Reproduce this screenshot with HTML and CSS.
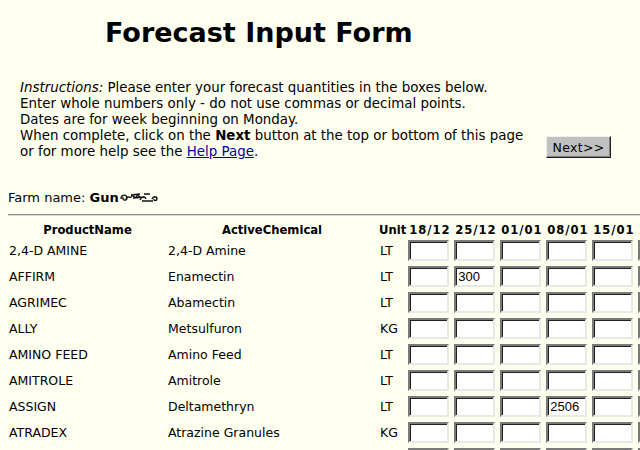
FILE: index.html
```html
<!DOCTYPE html>
<html>
<head>
<meta charset="utf-8">
<title>Forecast Input Form</title>
<link rel="stylesheet" href="styles.css">
</head>
<body>
<div class="page">
  <header class="top">
    <h1 class="title">Forecast Input Form</h1>
  </header>
  <section class="intro">
    <p class="instructions"><em>Instructions:</em> Please enter your forecast quantities in the boxes below.<br>
    Enter whole numbers only - do not use commas or decimal points.<br>
    Dates are for week beginning on Monday.<br>
    When complete, click on the <b>Next</b> button at the top or bottom of this page<br>
    or for more help see the <a href="#" class="help">Help Page</a>.</p>
    <button class="next" type="button">Next&gt;&gt;</button>
  </section>
  <p class="farm">Farm name: <b>Gun</b><svg class="scrib" width="42" height="12" viewBox="0 0 40 12"><path d="M1 8 C1 3 7 3 7 7 C7 10 2 10 3 6 M6 8 C8 3 10 9 12 5 C13 3 15 9 17 5 C18 3 20 8 22 6 M11 4 L20 3 M13 7 L25 6 M20 9 C22 5 25 5 26 8 M24 3 L30 3 M22 10 L33 10 M32 8 C33 5 37 5 37 8 C37 10 33 10 34 8" fill="none" stroke="#111" stroke-width="1.4"/></svg></p>
  <hr class="rule">
  <table class="grid">
    <thead>
      <tr>
        <th class="c-prod">ProductName</th>
        <th class="c-chem">ActiveChemical</th>
        <th class="c-unit">Unit</th>
        <th class="c-date">18/12</th>
        <th class="c-date">25/12</th>
        <th class="c-date">01/01</th>
        <th class="c-date">08/01</th>
        <th class="c-date">15/01</th>
        <th class="c-date">22/01</th>
      </tr>
    </thead>
    <tbody>
      <tr><td class="c-prod">2,4-D AMINE</td><td class="c-chem">2,4-D Amine</td><td class="c-unit">LT</td><td class="c-date"><input class="qty"></td><td class="c-date"><input class="qty"></td><td class="c-date"><input class="qty"></td><td class="c-date"><input class="qty"></td><td class="c-date"><input class="qty"></td><td class="c-date"><input class="qty"></td></tr>
      <tr><td class="c-prod">AFFIRM</td><td class="c-chem">Enamectin</td><td class="c-unit">LT</td><td class="c-date"><input class="qty"></td><td class="c-date"><input class="qty" value="300"></td><td class="c-date"><input class="qty"></td><td class="c-date"><input class="qty"></td><td class="c-date"><input class="qty"></td><td class="c-date"><input class="qty"></td></tr>
      <tr><td class="c-prod">AGRIMEC</td><td class="c-chem">Abamectin</td><td class="c-unit">LT</td><td class="c-date"><input class="qty"></td><td class="c-date"><input class="qty"></td><td class="c-date"><input class="qty"></td><td class="c-date"><input class="qty"></td><td class="c-date"><input class="qty"></td><td class="c-date"><input class="qty"></td></tr>
      <tr><td class="c-prod">ALLY</td><td class="c-chem">Metsulfuron</td><td class="c-unit">KG</td><td class="c-date"><input class="qty"></td><td class="c-date"><input class="qty"></td><td class="c-date"><input class="qty"></td><td class="c-date"><input class="qty"></td><td class="c-date"><input class="qty"></td><td class="c-date"><input class="qty"></td></tr>
      <tr><td class="c-prod">AMINO FEED</td><td class="c-chem">Amino Feed</td><td class="c-unit">LT</td><td class="c-date"><input class="qty"></td><td class="c-date"><input class="qty"></td><td class="c-date"><input class="qty"></td><td class="c-date"><input class="qty"></td><td class="c-date"><input class="qty"></td><td class="c-date"><input class="qty"></td></tr>
      <tr><td class="c-prod">AMITROLE</td><td class="c-chem">Amitrole</td><td class="c-unit">LT</td><td class="c-date"><input class="qty"></td><td class="c-date"><input class="qty"></td><td class="c-date"><input class="qty"></td><td class="c-date"><input class="qty"></td><td class="c-date"><input class="qty"></td><td class="c-date"><input class="qty"></td></tr>
      <tr><td class="c-prod">ASSIGN</td><td class="c-chem">Deltamethryn</td><td class="c-unit">LT</td><td class="c-date"><input class="qty"></td><td class="c-date"><input class="qty"></td><td class="c-date"><input class="qty"></td><td class="c-date"><input class="qty" value="2506"></td><td class="c-date"><input class="qty"></td><td class="c-date"><input class="qty"></td></tr>
      <tr><td class="c-prod">ATRADEX</td><td class="c-chem">Atrazine Granules</td><td class="c-unit">KG</td><td class="c-date"><input class="qty"></td><td class="c-date"><input class="qty"></td><td class="c-date"><input class="qty"></td><td class="c-date"><input class="qty"></td><td class="c-date"><input class="qty"></td><td class="c-date"><input class="qty"></td></tr>
      <tr><td class="c-prod">AVADEX</td><td class="c-chem">Tri-allate</td><td class="c-unit">LT</td><td class="c-date"><input class="qty"></td><td class="c-date"><input class="qty"></td><td class="c-date"><input class="qty"></td><td class="c-date"><input class="qty"></td><td class="c-date"><input class="qty"></td><td class="c-date"><input class="qty"></td></tr>
    </tbody>
  </table>
</div>
</body>
</html>
```

FILE: styles.css
```css
html, body {
  margin: 0;
  padding: 0;
  background: #fffff0;
  overflow: hidden;
}
.page {
  width: 720px;
  padding: 0 0 0 8px;
  font-family: "DejaVu Sans", Verdana, sans-serif;
  font-size: 12.5px;
  color: #000;
}
.top {
  padding: 15px 0 0 97px;
  height: 80px;
  box-sizing: border-box;
}
.title {
  margin: 0;
  font-size: 27px;
  font-weight: bold;
  line-height: 36px;
}
.intro {
  display: flex;
  align-items: flex-end;
  padding-left: 12px;
  width: 591px;
  justify-content: space-between;
}
.instructions {
  margin: 0;
  line-height: 16px;
  font-size: 13.4px;
}
.help {
  color: #0000a0;
}
.next {
  width: 65px;
  height: 22px;
  margin-bottom: 2px;
  background: #c0c0c0;
  border: 1px solid;
  border-color: #f0f0f0 #202020 #202020 #f0f0f0;
  box-shadow: inset -1px -1px 0 #808080;
  font-family: "DejaVu Sans", sans-serif;
  font-size: 12.5px;
  letter-spacing: 0.3px;
  padding: 0;
  color: #000;
}
.farm {
  margin: 30px 0 0 0;
  line-height: 16px;
  font-size: 13px;
}
.scrib {
  margin-left: 0;
  vertical-align: -1px;
}
.rule {
  margin: 8px 0 4px 0;
  border: 0;
  border-top: 1px solid #8a8a8a;
  border-bottom: 1px solid #dcdcd0;
  height: 0;
}
.grid {
  border-collapse: collapse;
  table-layout: fixed;
}
.grid th {
  font-weight: bold;
  height: 15px;
  padding: 2px 0 0 0;
  font-size: 11.6px;
  vertical-align: middle;
}
.grid td {
  height: 26px;
  padding: 0;
  font-size: 12.5px;
}
.c-prod { width: 157px; padding-left: 1px !important; }
.c-chem { width: 210px; }
td.c-chem { padding-left: 2px !important; }
th.c-chem { text-align: center; }
.c-unit { width: 26px; text-align: left; }
td.c-unit { padding-left: 2px !important; }
th.c-unit { padding-left: 1px !important; }
.c-date { width: 44px; text-align: left; }
th.c-date { width: 43px; padding-left: 3px !important; letter-spacing: 1px; white-space: nowrap; }
td.c-date { padding-left: 2px !important; }
.qty {
  width: 41px;
  height: 21px;
  box-sizing: border-box;
  display: block;
  border: 2px solid;
  border-color: #7a7a7a #e8e8e8 #e8e8e8 #7a7a7a;
  box-shadow: inset 1px 1px 0 #202020;
  background: #fff;
  padding: 1px 1px 0 2px;
  font-family: "Liberation Sans", Arial, sans-serif;
  font-size: 13px;
  margin: 0;
}
```
